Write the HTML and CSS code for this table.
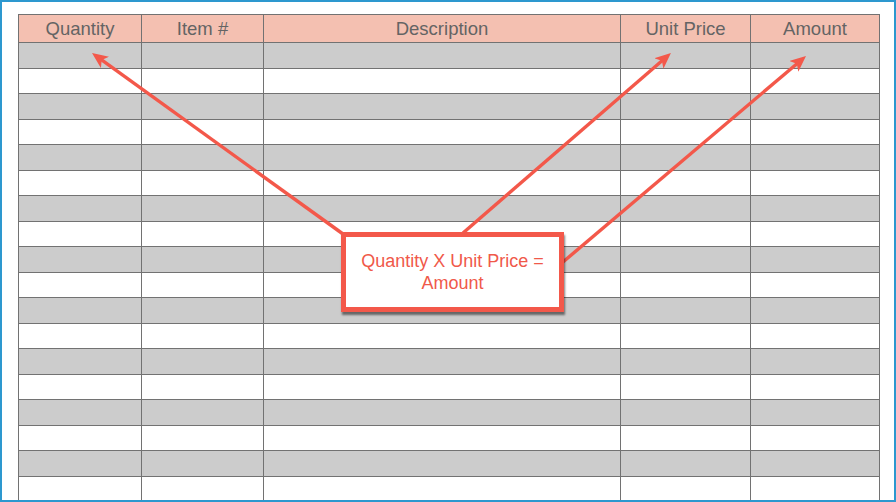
FILE: index.html
```html
<!DOCTYPE html>
<html>
<head>
<meta charset="utf-8">
<link rel="stylesheet" href="styles.css">
</head>
<body>
<div class="frame">
  <div class="sheet">
    <div class="hd">Quantity</div><div class="hd">Item #</div><div class="hd">Description</div><div class="hd">Unit Price</div><div class="hd">Amount</div>
    <div class="c g"></div><div class="c g"></div><div class="c g"></div><div class="c g"></div><div class="c g"></div>
    <div class="c"></div><div class="c"></div><div class="c"></div><div class="c"></div><div class="c"></div>
    <div class="c g"></div><div class="c g"></div><div class="c g"></div><div class="c g"></div><div class="c g"></div>
    <div class="c"></div><div class="c"></div><div class="c"></div><div class="c"></div><div class="c"></div>
    <div class="c g"></div><div class="c g"></div><div class="c g"></div><div class="c g"></div><div class="c g"></div>
    <div class="c"></div><div class="c"></div><div class="c"></div><div class="c"></div><div class="c"></div>
    <div class="c g"></div><div class="c g"></div><div class="c g"></div><div class="c g"></div><div class="c g"></div>
    <div class="c"></div><div class="c"></div><div class="c"></div><div class="c"></div><div class="c"></div>
    <div class="c g"></div><div class="c g"></div><div class="c g"></div><div class="c g"></div><div class="c g"></div>
    <div class="c"></div><div class="c"></div><div class="c"></div><div class="c"></div><div class="c"></div>
    <div class="c g"></div><div class="c g"></div><div class="c g"></div><div class="c g"></div><div class="c g"></div>
    <div class="c"></div><div class="c"></div><div class="c"></div><div class="c"></div><div class="c"></div>
    <div class="c g"></div><div class="c g"></div><div class="c g"></div><div class="c g"></div><div class="c g"></div>
    <div class="c"></div><div class="c"></div><div class="c"></div><div class="c"></div><div class="c"></div>
    <div class="c g"></div><div class="c g"></div><div class="c g"></div><div class="c g"></div><div class="c g"></div>
    <div class="c"></div><div class="c"></div><div class="c"></div><div class="c"></div><div class="c"></div>
    <div class="c g"></div><div class="c g"></div><div class="c g"></div><div class="c g"></div><div class="c g"></div>
    <div class="c"></div><div class="c"></div><div class="c"></div><div class="c"></div><div class="c"></div>
  </div>
</div>
<svg class="arrows" width="896" height="502" viewBox="0 0 896 502">
  <defs>
    <marker id="ah" markerUnits="userSpaceOnUse" markerWidth="17" markerHeight="14" refX="8" refY="7" orient="auto">
      <path d="M0,0 L16,7 L0,14 L4,7 Z" fill="#f3584a"/>
    </marker>
  </defs>
  <g stroke="#f3584a" stroke-width="3.4" fill="none">
    <line x1="343" y1="234" x2="98.5" y2="57.7" marker-end="url(#ah)"/>
    <line x1="463" y1="233" x2="664.9" y2="58.2" marker-end="url(#ah)"/>
    <line x1="563" y1="262" x2="799.9" y2="61.2" marker-end="url(#ah)"/>
  </g>
</svg>
<div class="callout">Quantity X Unit Price =<br>Amount</div>
</body>
</html>
```
FILE: styles.css
```css
html, body {
  margin: 0;
  padding: 0;
  background: #ffffff;
}
body {
  position: relative;
  width: 896px;
  height: 502px;
  overflow: hidden;
  font-family: "Liberation Sans", Arial, sans-serif;
}
.frame {
  box-sizing: border-box;
  width: 896px;
  height: 502px;
  border: 2px solid #2d98cf;
  padding: 12px 0 0 16px;
  overflow: hidden;
  background: #ffffff;
}
.sheet {
  display: grid;
  grid-template-columns: 122px 121px 356px 129px 128px;
  grid-template-rows: 27px repeat(10, 25px 24px);
  gap: 1px;
  padding: 1px;
  background: #727272;
  width: max-content;
}
.hd {
  background: #f4c0b1;
  color: #646464;
  font-size: 18.5px;
  display: flex;
  align-items: center;
  justify-content: center;
  line-height: 1;
  padding-top: 2px;
}
.c {
  background: #ffffff;
}
.c.g {
  background: #cccccc;
}
.arrows {
  position: absolute;
  left: 0;
  top: 0;
}
.callout {
  position: absolute;
  left: 341px;
  top: 232px;
  box-sizing: border-box;
  width: 223px;
  height: 80px;
  border: 5px solid #f3584a;
  background: #ffffff;
  box-shadow: 1px 3px 2px rgba(0, 0, 0, 0.5);
  color: #f0594a;
  font-size: 18px;
  line-height: 22px;
  display: flex;
  align-items: center;
  justify-content: center;
  text-align: center;
  padding-bottom: 1px;
}
```
